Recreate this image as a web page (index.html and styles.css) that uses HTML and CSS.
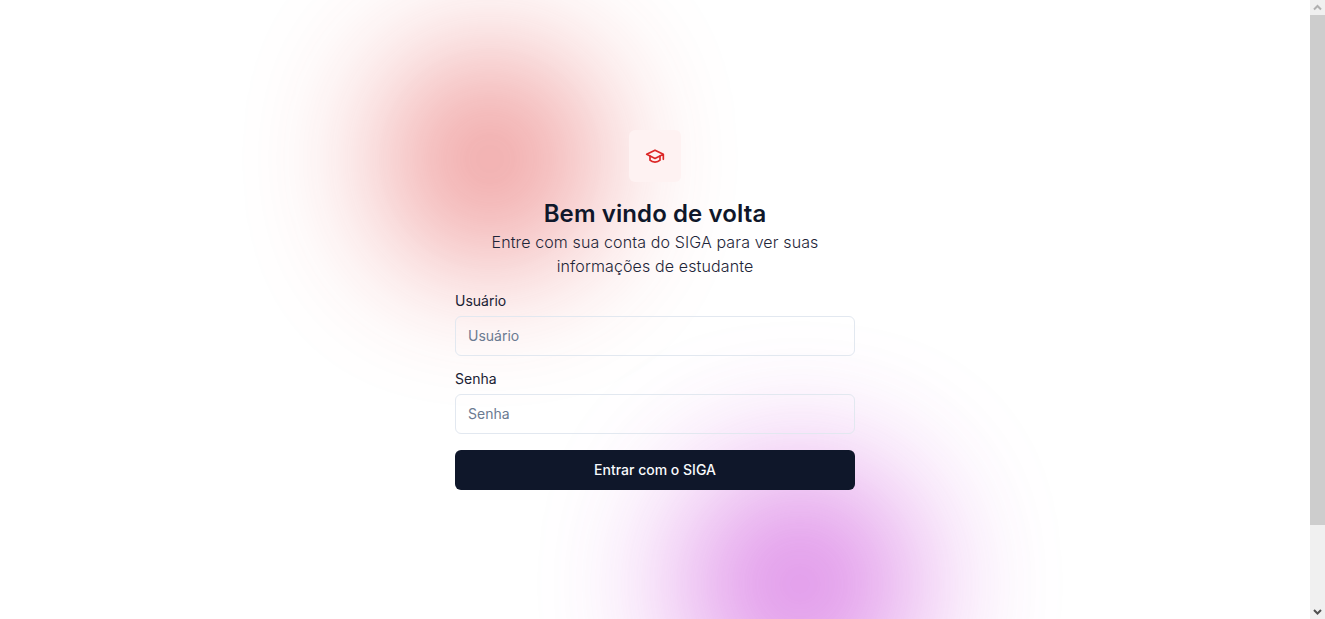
FILE: index.html
```html
<!DOCTYPE html>
<html lang="pt-BR">
<head>
<meta charset="utf-8">
<title>Entrar</title>
<link rel="stylesheet" href="styles.css">
</head>
<body>
<div class="window">
  <main class="page">
    <div class="glow glow-red"></div>
    <div class="glow glow-purple"></div>
    <section class="login">
      <div class="badge">
        <svg width="20" height="20" viewBox="0 0 24 24" fill="none" stroke="currentColor" stroke-width="2" stroke-linecap="round" stroke-linejoin="round"><path d="M22 10v6M2 10l10-5 10 5-10 5z"/><path d="M6 12v5c3 3 9 3 12 0v-5"/></svg>
      </div>
      <header class="intro">
        <h1 class="title">Bem vindo de volta</h1>
        <p class="subtitle">Entre com sua conta do SIGA para ver suas informações de estudante</p>
      </header>
      <form class="form">
        <div class="field">
          <label class="label" for="user">Usuário</label>
          <input class="input" id="user" type="text" placeholder="Usuário">
        </div>
        <div class="field">
          <label class="label" for="pass">Senha</label>
          <input class="input" id="pass" type="password" placeholder="Senha">
        </div>
        <button class="submit" type="button">Entrar com o SIGA</button>
      </form>
    </section>
  </main>
  <div class="scrollbar">
    <div class="arrow arrow-up"><svg width="15" height="15" viewBox="0 0 15 15" fill="none" stroke="currentColor" stroke-width="2"><path d="M4 9.5l3.5-3.5 3.5 3.5"/></svg></div>
    <div class="thumb"></div>
    <div class="track"></div>
    <div class="arrow arrow-down"><svg width="15" height="15" viewBox="0 0 15 15" fill="none" stroke="currentColor" stroke-width="2"><path d="M4 6l3.5 3.5 3.5-3.5"/></svg></div>
  </div>
</div>
</body>
</html>
```
FILE: styles.css
```css
* { box-sizing: border-box; }
body {
  margin: 0;
  overflow: hidden;
  background: #fff;
  color: #0f172a;
  font-family: Inter, "Liberation Sans", sans-serif;
}
.window { display: flex; height: 619px; }
.page {
  position: relative;
  flex: 1;
  display: flex;
  justify-content: center;
  align-items: center;
  overflow: hidden;
}
.glow {
  position: absolute;
  border-radius: 50%;
}
.glow-red {
  left: 386px;
  top: 55px;
  width: 208px;
  height: 208px;
  background: #dc2626;
  opacity: .5;
  filter: blur(71px);
}
.glow-purple {
  left: 686px;
  top: 470px;
  width: 228px;
  height: 228px;
  background: #c026d3;
  opacity: .58;
  filter: blur(73px);
}
.login {
  position: relative;
  width: 400px;
  display: flex;
  flex-direction: column;
  align-items: center;
}
.badge {
  display: flex;
  padding: 16px;
  border-radius: 6px;
  background: #fef2f2;
  color: #dc2626;
}
.intro { margin-top: 16px; width: 336px; text-align: center; }
.title {
  margin: 0;
  font-size: 24px;
  line-height: 32px;
  font-weight: 600;
  letter-spacing: .1px;
}
.subtitle {
  margin: 0;
  font-size: 16px;
  line-height: 24px;
  font-weight: 300;
  letter-spacing: .12px;
  color: #1e2538;
}
.form {
  width: 100%;
  margin-top: 16px;
  display: flex;
  flex-direction: column;
  gap: 16px;
}
.field { display: flex; flex-direction: column; gap: 8px; }
.label { font-size: 14px; line-height: 14px; color: #1a2133; }
.input {
  width: 100%;
  height: 40px;
  padding: 8px 12px;
  border: 1px solid #e2e8f0;
  border-radius: 6px;
  background: transparent;
  font: 14px/20px Inter, "Liberation Sans", sans-serif;
}
.input::placeholder { color: #6b7a91; opacity: 1; }
.submit {
  height: 40px;
  border: 0;
  border-radius: 6px;
  background: #0f172a;
  color: #f8fafc;
  font: 500 14px/20px Inter, "Liberation Sans", sans-serif;
}
.scrollbar {
  width: 15px;
  display: flex;
  flex-direction: column;
  background: #f0f0f0;
}
.arrow { height: 15px; }
.arrow svg { display: block; }
.arrow-up { color: #b0b0b0; }
.arrow-down { color: #505050; }
.thumb { height: 510px; background: #cdcdcd; }
.track { flex: 1; }
```
